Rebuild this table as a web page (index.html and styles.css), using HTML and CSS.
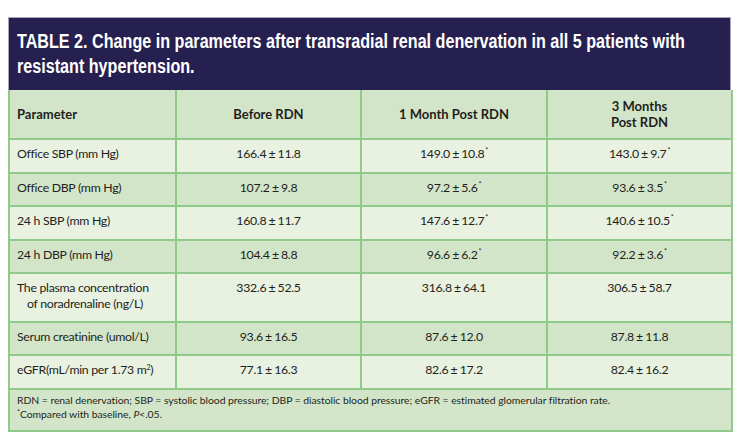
FILE: index.html
```html
<!DOCTYPE html>
<html lang="en">
<head>
<meta charset="utf-8">
<title>Table 2</title>
<link rel="stylesheet" href="styles.css">
</head>
<body>
<div class="figure">
  <div class="caption"><span class="cap-line">TABLE 2. Change in parameters after transradial renal denervation in all 5 patients with</span><span class="cap-line">resistant hypertension.</span></div>
  <table class="data">
    <colgroup>
      <col class="c1"><col class="c2"><col class="c3"><col class="c4">
    </colgroup>
    <thead>
      <tr class="head">
        <th class="param">Parameter</th>
        <th>Before RDN</th>
        <th>1 Month Post RDN</th>
        <th>3 Months<br>Post RDN</th>
      </tr>
    </thead>
    <tbody>
      <tr class="light">
        <td class="param">Office SBP (mm Hg)</td>
        <td>166.4 ± 11.8</td>
        <td>149.0 ± 10.8<sup>*</sup></td>
        <td>143.0 ± 9.7<sup>*</sup></td>
      </tr>
      <tr class="dark">
        <td class="param">Office DBP (mm Hg)</td>
        <td>107.2 ± 9.8</td>
        <td>97.2 ± 5.6<sup>*</sup></td>
        <td>93.6 ± 3.5<sup>*</sup></td>
      </tr>
      <tr class="light">
        <td class="param">24 h SBP (mm Hg)</td>
        <td>160.8 ± 11.7</td>
        <td>147.6 ± 12.7<sup>*</sup></td>
        <td>140.6 ± 10.5<sup>*</sup></td>
      </tr>
      <tr class="dark">
        <td class="param">24 h DBP (mm Hg)</td>
        <td>104.4 ± 8.8</td>
        <td>96.6 ± 6.2<sup>*</sup></td>
        <td>92.2 ± 3.6<sup>*</sup></td>
      </tr>
      <tr class="light tall">
        <td class="param">The plasma concentration<br><span class="indent">of noradrenaline (ng/L)</span></td>
        <td>332.6 ± 52.5</td>
        <td>316.8 ± 64.1</td>
        <td>306.5 ± 58.7</td>
      </tr>
      <tr class="dark">
        <td class="param">Serum creatinine (umol/L)</td>
        <td>93.6 ± 16.5</td>
        <td>87.6 ± 12.0</td>
        <td>87.8 ± 11.8</td>
      </tr>
      <tr class="light">
        <td class="param">eGFR(mL/min per 1.73 m<sup class="sq">2</sup>)</td>
        <td>77.1 ± 16.3</td>
        <td>82.6 ± 17.2</td>
        <td>82.4 ± 16.2</td>
      </tr>
    </tbody>
    <tfoot>
      <tr class="foot">
        <td colspan="4"><div class="note">RDN = renal denervation; SBP = systolic blood pressure; DBP = diastolic blood pressure; eGFR = estimated glomerular filtration rate.<br><sup class="fn">*</sup>Compared with baseline, <i>P</i>&lt;.05.</div></td>
      </tr>
    </tfoot>
  </table>
</div>
</body>
</html>
```
FILE: styles.css
```css
html, body {
  margin: 0;
  padding: 0;
  background: #ffffff;
}

body {
  font-family: Lato, "Open Sans", sans-serif;
  color: #231f20;
}

.figure {
  margin: 17px 0 0 8px;
  width: 723px;
}

.caption {
  box-sizing: border-box;
  height: 73px;
  background: #262050;
  border: 1px solid #a7a4bd;
  border-bottom: none;
  color: #ffffff;
  font-family: "Liberation Sans", Arial, sans-serif;
  font-weight: bold;
  font-size: 20px;
  line-height: 25px;
  padding: 11px 8px 0 8px;
  overflow: hidden;
}

.cap-line {
  display: block;
  white-space: nowrap;
  transform: scaleX(0.807);
  transform-origin: left center;
}

.data {
  width: 723px;
  border-collapse: collapse;
  table-layout: fixed;
  font-size: 12.3px;
  letter-spacing: -0.3px;
  border: 2px solid #8fca8a;
  border-top: none;
}

.c1 { width: 167px; }
.c2 { width: 185px; }
.c3 { width: 186px; }
.c4 { width: 185px; }

.data th,
.data td {
  border: 2px solid #8fca8a;
  text-align: center;
  padding: 0 8px;
  line-height: 16px;
}

.data th {
  font-weight: bold;
  font-size: 13px;
  letter-spacing: 0;
  height: 47px;
  padding-top: 0;
  padding-bottom: 1px;
}

.head {
  background: #d3e5c8;
}

.data thead th {
  border-top: none;
}

.data tbody td {
  height: 28.5px;
  padding-top: 0;
  padding-bottom: 3px;
  vertical-align: middle;
  letter-spacing: -0.3px;
  word-spacing: -0.6px;
}

.data tbody td.param {
  letter-spacing: -0.3px;
  word-spacing: 0;
}

.data tbody tr.tall td {
  height: 40.5px;
  vertical-align: top;
  padding-top: 6px;
  padding-bottom: 0;
}

.light { background: #e9f1e0; }
.dark { background: #d3e5c8; }

.data .param {
  text-align: left;
  padding-left: 7px;
}

.indent {
  padding-left: 10px;
}

sup {
  font-size: 7px;
  line-height: 0;
  vertical-align: 5px;
  margin-left: 1px;
}

sup.sq {
  margin-left: 0;
  vertical-align: 4px;
}

.foot {
  background: #d3e5c8;
}

.data tfoot td {
  text-align: left;
  padding: 0 7px;
  vertical-align: top;
}

.note {
  box-sizing: border-box;
  height: 40px;
  padding-top: 3px;
  font-size: 10.4px;
  letter-spacing: -0.05px;
  line-height: 14px;
}

sup.fn {
  margin-left: 0;
  vertical-align: 3px;
}
```
